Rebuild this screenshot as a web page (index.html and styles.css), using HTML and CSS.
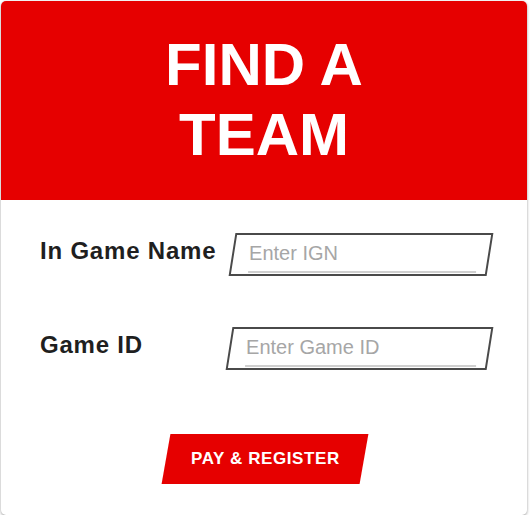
FILE: index.html
```html
<!DOCTYPE html>
<html lang="en">
<head>
<meta charset="utf-8">
<title>Find a Team</title>
<link rel="stylesheet" href="styles.css">
</head>
<body>
<div class="card">
  <header class="card-header">
    <h1 class="title">FIND A TEAM</h1>
  </header>
  <form class="form">
    <div class="row">
      <label class="label" for="ign">In Game Name</label>
      <div class="field field-first">
        <input class="input" id="ign" type="text" placeholder="Enter IGN">
      </div>
    </div>
    <div class="row">
      <label class="label" for="gid">Game ID</label>
      <div class="field">
        <input class="input" id="gid" type="text" placeholder="Enter Game ID">
      </div>
    </div>
    <button class="btn" type="button"><span class="btn-text">PAY &amp; REGISTER</span></button>
  </form>
</div>
</body>
</html>
```

FILE: styles.css
```css
* { box-sizing: border-box; }

body {
  margin: 0;
  background: #fff;
  font-family: "Liberation Sans", Arial, sans-serif;
}

.card {
  margin: 1px 3px 0 1px;
  width: 526px;
  border-radius: 5px;
  overflow: hidden;
  background: #fff;
  box-shadow: 0 1px 3px rgba(0, 0, 0, 0.4);
}

.card-header {
  background: #e60000;
  height: 199px;
  padding-top: 29px;
}

.title {
  margin: 0 auto;
  max-width: 320px;
  color: #fff;
  font-size: 60px;
  line-height: 70px;
  font-weight: 700;
  text-align: center;
}

.form {
  padding: 33px 37px 31px 39px;
  display: flex;
  flex-direction: column;
}

.row {
  display: flex;
  align-items: flex-start;
}

.row + .row {
  margin-top: 51px;
}

.label {
  width: 189px;
  flex: none;
  margin-top: 4px;
  font-size: 24px;
  line-height: 28px;
  font-weight: 700;
  letter-spacing: 0.8px;
  color: #1f1f1f;
}

.field {
  flex: 1;
  height: 43px;
  border: 2px solid #4a4a4a;
  padding: 0 12px 0 14px;
  transform: skewX(-9deg);
}

.field-first {
  margin-left: 3px;
}

.input {
  display: block;
  width: 100%;
  height: 38px;
  border: 0;
  border-bottom: 2px solid #cfcfcf;
  padding: 0 0 0 1px;
  margin: 0;
  background: transparent;
  font-family: "Liberation Sans", Arial, sans-serif;
  font-size: 20px;
  color: #333;
  outline: none;
  transform: skewX(9deg);
}

.input::placeholder {
  color: #a6a6a6;
}

.btn {
  display: block;
  align-self: center;
  margin-top: 64px;
  width: 198px;
  height: 50px;
  border: 0;
  padding: 0;
  background: #e60000;
  color: #fff;
  font-family: "Liberation Sans", Arial, sans-serif;
  font-size: 17px;
  font-weight: 700;
  letter-spacing: 0.6px;
  transform: skewX(-10deg);
  cursor: pointer;
}

.btn-text {
  display: inline-block;
  transform: skewX(10deg);
}
```
